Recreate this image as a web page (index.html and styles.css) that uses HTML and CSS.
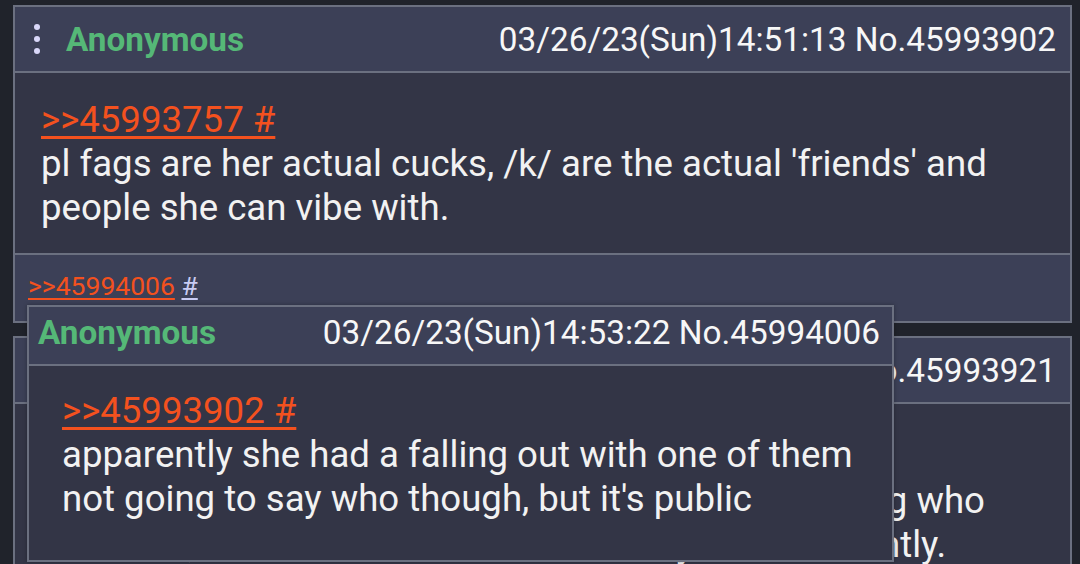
FILE: index.html
```html
<!DOCTYPE html>
<html lang="en">
<head>
  <meta charset="UTF-8" />
  <meta name="viewport" content="width=device-width, initial-scale=1.0"/>
  <title>/k/ - Thread</title>
  <link rel="stylesheet" href="styles.css">
</head>
<body>

  <div class="thread">
    <article class="post">
      <header class="post-head">
        <span class="dots"><i></i><i></i><i></i></span>
        <span class="name">Anonymous</span>
        <span class="meta">03/26/23(Sun)14:51:13 No.45993902</span>
      </header>
      <div class="post-body">
        <a class="quote" href="#p45993757">&gt;&gt;45993757 #</a>
        <p>pl fags are her actual cucks, /k/ are the actual 'friends' and<br>people she can vibe with.</p>
      </div>
      <div class="replies">
        <a class="reply-link" href="#p45994006">&gt;&gt;45994006</a> <a class="reply-hash" href="#p45994006">#</a>
      </div>
    </article>

    <article class="post">
      <header class="post-head">
        <span class="dots"><i></i><i></i><i></i></span>
        <span class="name">Anonymous</span>
        <span class="meta">03/26/23(Sun)14:52:04 No.45993921</span>
      </header>
      <div class="post-body post-body-low">
        <a class="quote" href="#p45993902">&gt;&gt;45993902 #</a>
        <p>the falling out was over some stream fight, not saying who<br>started it, but she deleted the vods and just left recently.<br>nobody here knows any of them personally anyway</p>
      </div>
    </article>

    <!-- hover preview of the reply -->
    <article class="post preview">
      <header class="post-head">
        <span class="name">Anonymous</span>
        <span class="meta">03/26/23(Sun)14:53:22 No.45994006</span>
      </header>
      <div class="post-body">
        <a class="quote" href="#p45993902">&gt;&gt;45993902 #</a>
        <p>apparently she had a falling out with one of them<br>not going to say who though, but it's public</p>
      </div>
    </article>
  </div>

</body>
</html>
```

FILE: styles.css
```css
body {
  margin: 0;
  background-color: #20232b;
  font-family: Roboto, "Liberation Sans", sans-serif;
  color: #f2f2f2;
  overflow: hidden;
}
.thread {
  position: relative;
  display: flex;
  flex-direction: column;
  gap: 13px;
  padding: 5px 8px 0 13px;
}
.post {
  border: 2px solid #6b7080;
  background-color: #333546;
}
.post-head {
  display: flex;
  align-items: center;
  height: 64px;
  padding: 0 14px 0 19px;
  background-color: #3c4057;
  border-bottom: 2px solid #6b7080;
  font-size: 33.3px;
}
.dots {
  display: flex;
  flex-direction: column;
  gap: 6px;
  margin-right: 26px;
}
.dots i {
  display: block;
  width: 6px;
  height: 6px;
  border-radius: 50%;
  background-color: #d9d7f9;
}
.name {
  color: #55b877;
  font-weight: bold;
}
.meta {
  margin-left: auto;
  color: #f7f7f7;
}
.post-body {
  padding: 25px 26px 23px 26px;
  font-size: 36.6px;
  line-height: 44px;
}
.post-body-low {
  padding-top: 31px;
}
.post-body p {
  margin: 0;
}
.quote {
  color: #f4511e;
  text-decoration: underline;
  text-underline-offset: 4px;
}
.replies {
  height: 68px;
  padding: 15px 0 0 13px;
  box-sizing: border-box;
  background-color: #3c4057;
  border-top: 2px solid #6b7080;
  font-size: 26.5px;
}
.reply-link {
  color: #f4511e;
  text-decoration: underline;
  text-underline-offset: 3px;
}
.reply-hash {
  color: #c9cbf2;
  text-decoration: underline;
  text-underline-offset: 3px;
}
.preview {
  position: absolute;
  left: 27px;
  top: 305px;
  width: 863px;
  height: 253px;
  box-shadow: 0 0 4px rgba(0,0,0,0.3);
}
.preview .post-head {
  height: 59px;
  padding: 0 12px 6px 9px;
  box-sizing: border-box;
}
.preview .post-body {
  padding: 23px 30px 0 33px;
}
```
